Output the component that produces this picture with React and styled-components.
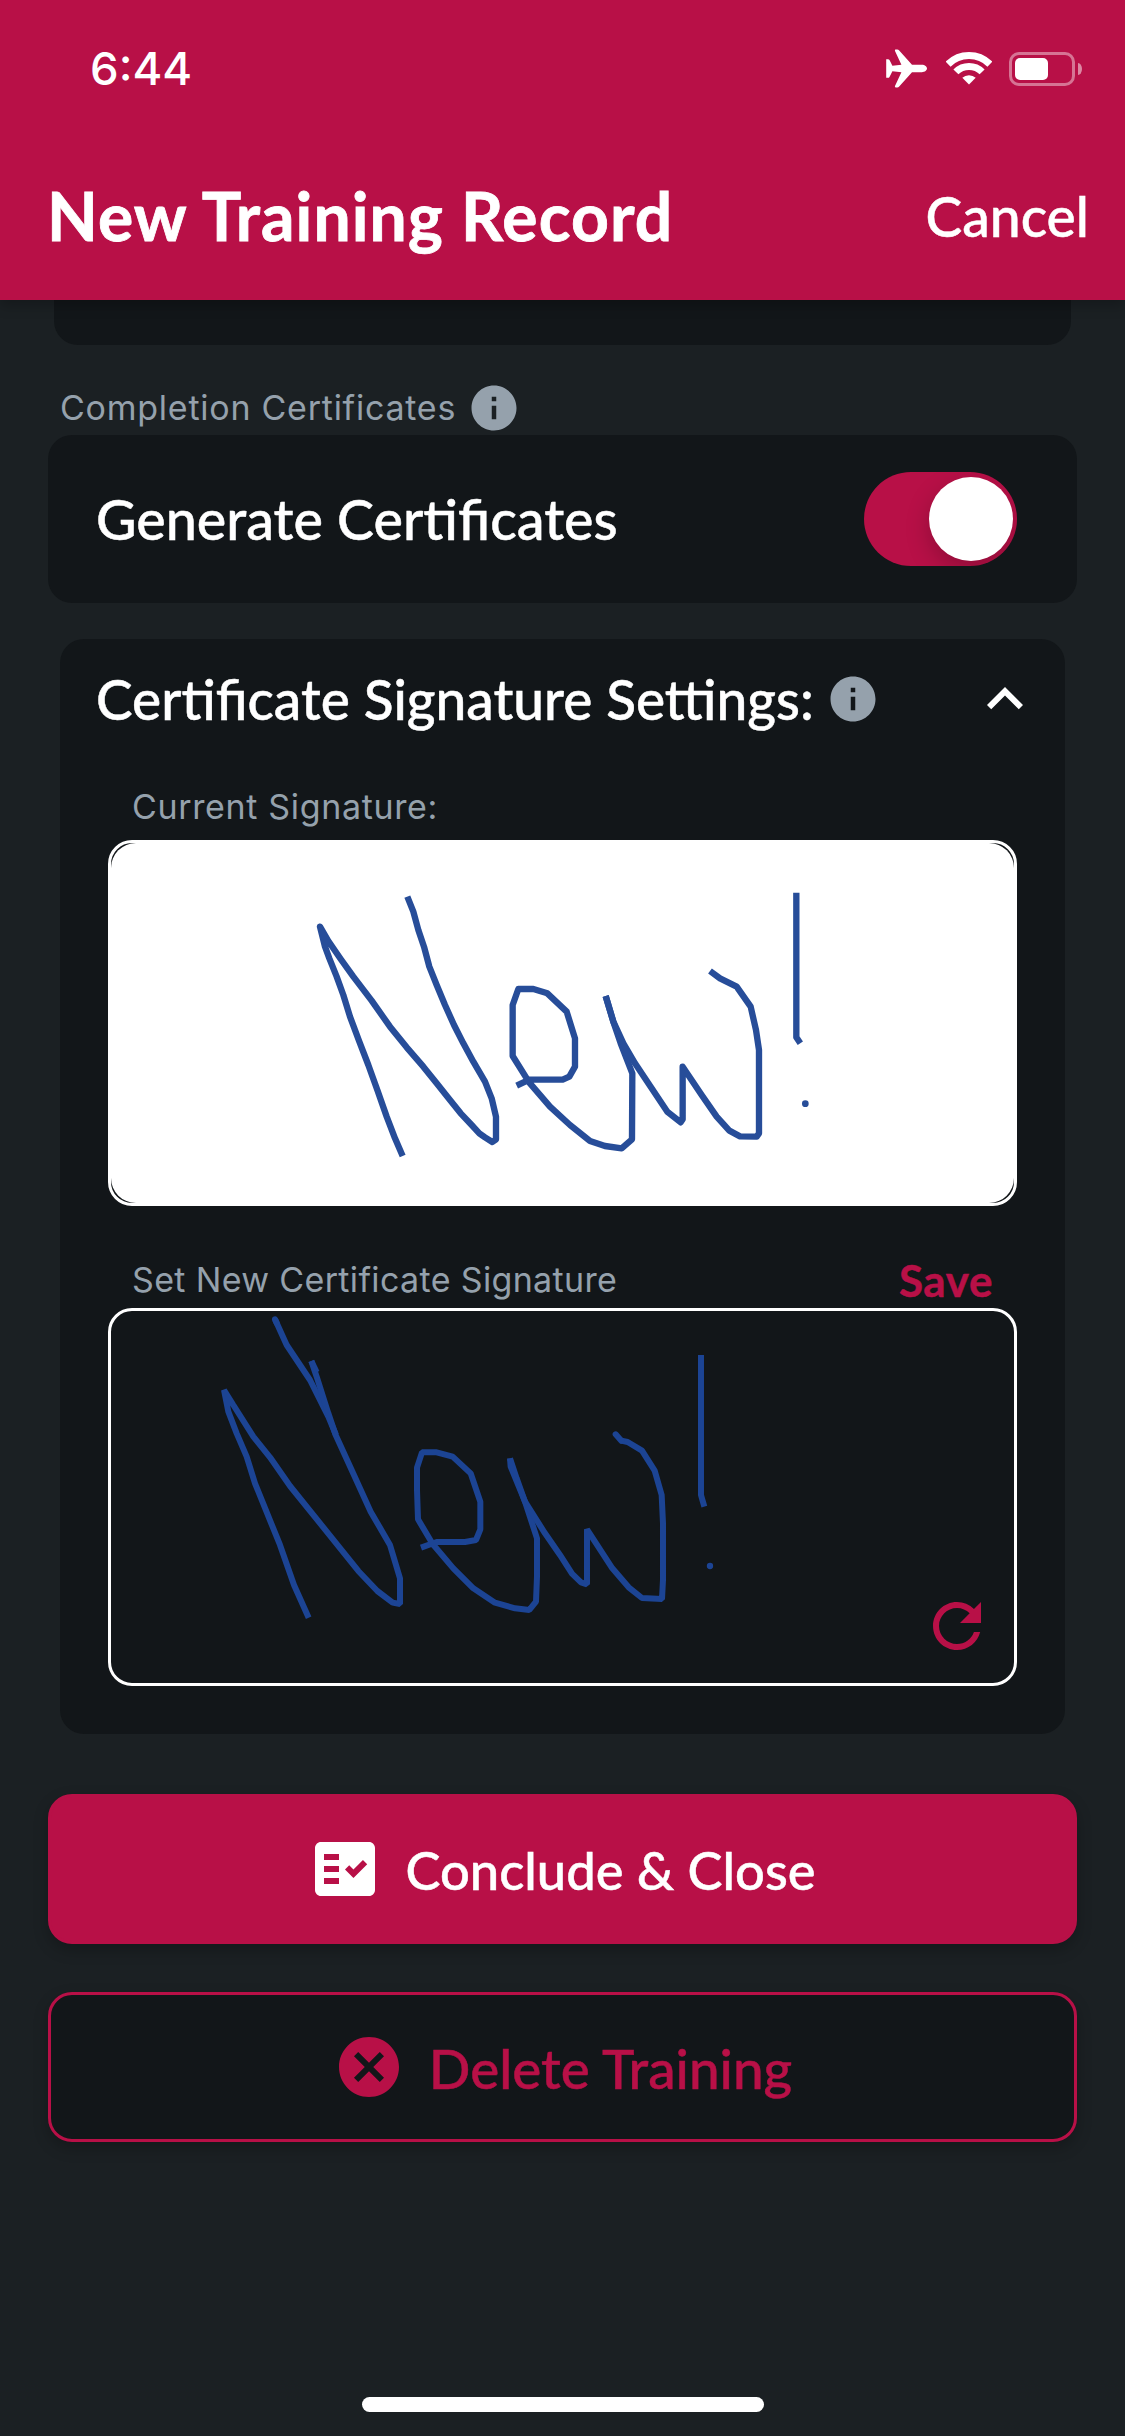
import React from "react";
import styled, { createGlobalStyle, ThemeProvider } from "styled-components";
import { MdInfo, MdExpandLess, MdRefresh, MdFactCheck, MdCancel } from "react-icons/md";

const theme = {
  primary: "#b81047",
  background: "#1b2023",
  surface: "#121619",
  text: "#ffffff",
  muted: "#95a1ac",
  ink: "#1c4494",
  heading: '"Lato", "Open Sans", sans-serif',
  body: '"Inter", "Noto Sans", sans-serif',
};

const GlobalStyle = createGlobalStyle`
  *, *::before, *::after { box-sizing: border-box; }
  body { margin: 0; background: ${theme.background}; }
  button { border: 0; padding: 0; background: none; font: inherit; color: inherit; }
  svg { display: block; flex: none; }
`;

const Screen = styled.div`
  display: flex;
  flex-direction: column;
  width: 1125px;
  height: 2436px;
  overflow: hidden;
  background: ${(p) => p.theme.background};
  color: ${(p) => p.theme.text};
  font-family: ${(p) => p.theme.heading};
`;

const Header = styled.header`
  position: relative;
  z-index: 1;
  flex: none;
  height: 300px;
  background: ${(p) => p.theme.primary};
  box-shadow: 0 6px 12px rgba(0, 0, 0, 0.22);
`;

const StatusBar = styled.div`
  display: flex;
  align-items: center;
  justify-content: space-between;
  height: 137px;
  padding: 0 43px 0 90px;
`;

const Clock = styled.span`
  font: 500 45.5px/56px ${(p) => p.theme.body};
`;

const StatusIcons = styled.div`
  display: flex;
  align-items: center;
`;

const PlaneIcon = styled.svg`
  width: 41px;
  height: 39px;
  margin-right: 19px;
`;

const WifiIcon = styled.svg`
  width: 46px;
  height: 33px;
  margin-right: 17px;
`;

const Battery = styled.div`
  width: 66px;
  height: 34px;
  padding: 3px;
  border: 3px solid rgba(255, 255, 255, 0.42);
  border-radius: 10px;
`;

const BatteryLevel = styled.div`
  width: 33px;
  height: 22px;
  border-radius: 5px;
  background: #fff;
`;

const BatteryTip = styled.div`
  width: 4px;
  height: 12px;
  margin-left: 3px;
  border-radius: 0 4px 4px 0 / 0 6px 6px 0;
  background: rgba(255, 255, 255, 0.5);
`;

const TitleBar = styled.div`
  display: flex;
  align-items: center;
  justify-content: space-between;
  height: 157px;
  padding: 0 36px 0 47px;
`;

const PageTitle = styled.h1`
  margin: 0;
  font-size: 66px;
  line-height: 80px;
  font-weight: 700;
  letter-spacing: 1.1px;
  -webkit-text-stroke: 0.8px currentColor;
`;

const CancelButton = styled.button`
  font-size: 55.2px;
  line-height: 66px;
  font-weight: 500;
  -webkit-text-stroke: 0.5px currentColor;
`;

const Body = styled.main`
  display: flex;
  flex: 1;
  flex-direction: column;
  padding: 0 48px;
`;

const Card = styled.section`
  flex: none;
  border-radius: 24px;
  background: ${(p) => p.theme.surface};
`;

const ScrolledCard = styled(Card)`
  height: 45px;
  margin: 0 6px;
  border-radius: 0 0 24px 24px;
`;

const SwitchCard = styled(Card)`
  display: flex;
  align-items: center;
  justify-content: space-between;
  height: 168px;
  padding: 0 60px 0 48px;
`;

const SignatureCard = styled(Card)`
  height: 1095px;
  margin: 36px 12px 0;
  padding-top: 24px;
`;

const SectionLabel = styled.div`
  display: flex;
  align-items: center;
  gap: 11px;
  height: 54px;
  margin-top: 36px;
  padding-left: 12px;
`;

const Label = styled.span`
  color: ${(p) => p.theme.muted};
  font: 400 34px/48px ${(p) => p.theme.body};
  letter-spacing: ${(p) => p.$spacing}px;
  white-space: nowrap;
`;

const SettingTitle = styled.h2`
  margin: 0;
  font-size: ${(p) => p.$size}px;
  line-height: 66px;
  font-weight: 500;
  -webkit-text-stroke: 0.5px currentColor;
  white-space: nowrap;
`;

const InfoIcon = styled(MdInfo)`
  width: 54px;
  height: 54px;
  color: ${(p) => p.theme.muted};
`;

const Switch = styled.div`
  display: flex;
  align-items: center;
  justify-content: flex-end;
  width: 153px;
  height: 94px;
  padding-right: 4px;
  border-radius: 47px;
  overflow: hidden;
  background: ${(p) => p.theme.primary};
`;

const Knob = styled.div`
  width: 84px;
  height: 84px;
  border-radius: 50%;
  background: #fff;
  box-shadow: 0 9px 24px rgba(0, 0, 0, 0.22);
`;

const SignatureHeader = styled.div`
  display: flex;
  align-items: center;
  gap: 12px;
  height: 72px;
  padding: 0 24px 0 36px;
`;

const Chevron = styled(MdExpandLess)`
  width: 72px;
  height: 72px;
  margin-left: auto;
`;

const FieldHeader = styled.div`
  display: flex;
  align-items: center;
  justify-content: space-between;
  height: 48px;
  margin: ${(p) => p.$top}px 72px ${(p) => p.$bottom}px;
`;

const SaveButton = styled.button`
  color: ${(p) => p.theme.primary};
  font-size: 44px;
  line-height: 50px;
  font-weight: 700;
  letter-spacing: 0.6px;
  -webkit-text-stroke: 0.5px currentColor;
`;

const Pad = styled.div`
  position: relative;
  height: ${(p) => p.$height}px;
  margin: 0 48px;
  border: 3px solid #fff;
  border-radius: 24px;
`;

const Paper = styled.div`
  height: 100%;
  border-radius: 25px;
  background: #fff;
  overflow: hidden;
`;

const Drawing = styled.svg`
  width: 100%;
  height: 100%;
  fill: none;
  stroke: ${(p) => p.theme.ink};
  stroke-width: ${(p) => p.$weight};
`;

const ResetButton = styled.button`
  position: absolute;
  right: 21px;
  bottom: 21px;
  color: ${(p) => p.theme.primary};
  font-size: 72px;
`;

const Actions = styled.div`
  display: flex;
  flex-direction: column;
  gap: 48px;
  margin-top: 60px;
`;

const ActionButton = styled.button`
  display: flex;
  align-items: center;
  justify-content: center;
  gap: 24px;
  height: 150px;
  border: 3px solid ${(p) => p.theme.primary};
  border-radius: 24px;
  background: ${(p) => (p.$outlined ? p.theme.surface : p.theme.primary)};
  color: ${(p) => (p.$outlined ? p.theme.primary : p.theme.text)};
  box-shadow: 0 6px 15px rgba(0, 0, 0, 0.24);
  font-size: ${(p) => p.$size}px;
  line-height: 66px;
  font-weight: 500;

  svg {
    width: 72px;
    height: 72px;
  }
`;

const ActionText = styled.span`
  padding-top: 1px;
  -webkit-text-stroke: 0.5px currentColor;
`;

const HomeIndicator = styled.div`
  width: 402px;
  height: 15px;
  margin: auto auto 24px;
  border-radius: 8px;
  background: #fff;
`;

const savedStrokes = [
  "M938 1188L915 1135L890 1070L862 990L835 915L808 845L780 770L760 705L740 650L718 595L705 560L690 500L715 543L752 597L790 650L845 722L900 800L950 862L1000 920L1040 970L1080 1020L1112 1060L1145 1095L1168 1120L1185 1132L1207 1146L1218 1138L1218 1070L1205 1015L1185 965L1150 905L1120 850L1092 795L1065 735L1040 675L1018 620L1002 560L985 510L970 455L952 410",
  "M1280 977L1318 959L1418 959L1438 950L1455 920L1455 835L1430 755L1372 700L1330 687L1285 687L1268 735L1268 888L1318 968L1380 1040L1440 1095L1500 1143L1545 1158L1595 1165L1626 1138L1627 940L1592 850L1570 785L1547 708",
  "M1547 708L1570 785L1600 850L1635 910L1685 985L1732 1055L1772 1087L1778 1078L1778 920L1835 1005L1880 1070L1918 1112L1950 1129L2000 1130L2007 1120L2007 870L1998 810L1982 740L1940 680L1890 655L1860 633",
  "M2119 398L2119 832L2131 850",
];

const newStrokes = [
  "M555 238L590 315L660 420L715 530L738 585",
  "M656 1133L612 1035L570 915L495 730L470 650L440 580L415 515L402 450L430 495L490 590L540 652L600 738L700 862L805 993L862 1053L908 1088L930 1092L930 1015L900 915L842 815L785 690L737 585L715 520L680 410L664 363",
  "M664 363L680 397",
  "M993 923L1040 906L1125 906L1158 900L1171 868L1171 785L1142 700L1088 650L1040 637L996 637L981 683L981 750L984 838L1028 912L1090 985L1150 1045L1215 1088L1275 1105L1318 1110L1338 1085L1341 1010L1341 895L1305 785L1262 680L1260 655",
  "M1260 655L1280 715L1305 785L1365 880L1410 945L1446 1001L1473 1027L1491 1033L1491 868L1567 985L1616 1042L1656 1074L1716 1077L1719 1020L1719 850L1715 765L1694 692L1656 632L1613 606L1594 602",
  "M1833 345L1833 765L1843 800",
];

function Plane() {
  return (
    <PlaneIcon viewBox="0 0 41 37" preserveAspectRatio="none" fill="#fff">
      <path d="M.2 9.7H2Q3 9.7 3.5 10.5L6.4 16L15.4 14.9L9 1.9Q8.4.5 9.8.5H11.2Q12.4.5 13.2 1.5L26 15H35.8C39 15 41 17 41 18.5S39 22 35.8 22H26L13.2 35.5Q12.4 36.5 11.2 36.5H9.8Q8.4 36.5 9 35.1L15.4 22.1L6.4 21L3.5 26.5Q3 27.3 2 27.3H.2Z" />
    </PlaneIcon>
  );
}

function Wifi() {
  return (
    <WifiIcon viewBox="0 0 46 33" fill="none" stroke="#fff" strokeWidth="7">
      <path d="M2.1 12.2A29.5 29.5 0 0 1 43.9 12.2" />
      <path d="M9.9 19.9A18.5 18.5 0 0 1 36.1 19.9" />
      <path d="M23 32.6L16.3 25.8A10 10 0 0 1 29.7 25.8Z" fill="#fff" stroke="none" />
    </WifiIcon>
  );
}

function SavedSignature() {
  return (
    <Drawing viewBox="111 843 903 360" $weight={19} strokeLinejoin="round">
      <g transform="translate(90 760) scale(.33333)" opacity=".95">
        {savedStrokes.map((d) => (
          <path key={d} d={d} />
        ))}
        <circle cx="2146" cy="1031" r="10" fill={theme.ink} stroke="none" />
      </g>
    </Drawing>
  );
}

function NewSignature() {
  return (
    <Drawing viewBox="111 1311 903 372" $weight={18} strokeLinejoin="bevel">
      <g transform="translate(90 1240) scale(.33333)">
        {newStrokes.map((d) => (
          <path key={d} d={d} />
        ))}
        <path d="M1594 602L1577 583M555 238L560 249" strokeLinecap="round" />
        <circle cx="1860" cy="978" r="9.5" fill={theme.ink} stroke="none" />
      </g>
    </Drawing>
  );
}

export default function App() {
  return (
    <ThemeProvider theme={theme}>
      <GlobalStyle />
      <Screen>
        <Header>
          <StatusBar>
            <Clock>6:44</Clock>
            <StatusIcons>
              <Plane />
              <Wifi />
              <Battery>
                <BatteryLevel />
              </Battery>
              <BatteryTip />
            </StatusIcons>
          </StatusBar>
          <TitleBar>
            <PageTitle>New Training Record</PageTitle>
            <CancelButton>Cancel</CancelButton>
          </TitleBar>
        </Header>
        <Body>
          <ScrolledCard />
          <SectionLabel>
            <Label $spacing={0.75}>Completion Certificates</Label>
            <InfoIcon />
          </SectionLabel>
          <SwitchCard>
            <SettingTitle $size={55.6}>Generate Certificates</SettingTitle>
            <Switch>
              <Knob />
            </Switch>
          </SwitchCard>
          <SignatureCard>
            <SignatureHeader>
              <SettingTitle $size={55}>Certificate Signature Settings:</SettingTitle>
              <InfoIcon />
              <Chevron />
            </SignatureHeader>
            <FieldHeader $top={48} $bottom={9}>
              <Label $spacing={0.65}>Current Signature:</Label>
            </FieldHeader>
            <Pad $height={366}>
              <Paper>
                <SavedSignature />
              </Paper>
            </Pad>
            <FieldHeader $top={50} $bottom={4}>
              <Label $spacing={0.35}>Set New Certificate Signature</Label>
              <SaveButton>Save</SaveButton>
            </FieldHeader>
            <Pad $height={378}>
              <NewSignature />
              <ResetButton>
                <MdRefresh />
              </ResetButton>
            </Pad>
          </SignatureCard>
          <Actions>
            <ActionButton $size={52.5}>
              <MdFactCheck />
              <ActionText>Conclude &amp; Close</ActionText>
            </ActionButton>
            <ActionButton $outlined $size={54.8}>
              <MdCancel />
              <ActionText>Delete Training</ActionText>
            </ActionButton>
          </Actions>
          <HomeIndicator />
        </Body>
      </Screen>
    </ThemeProvider>
  );
}
